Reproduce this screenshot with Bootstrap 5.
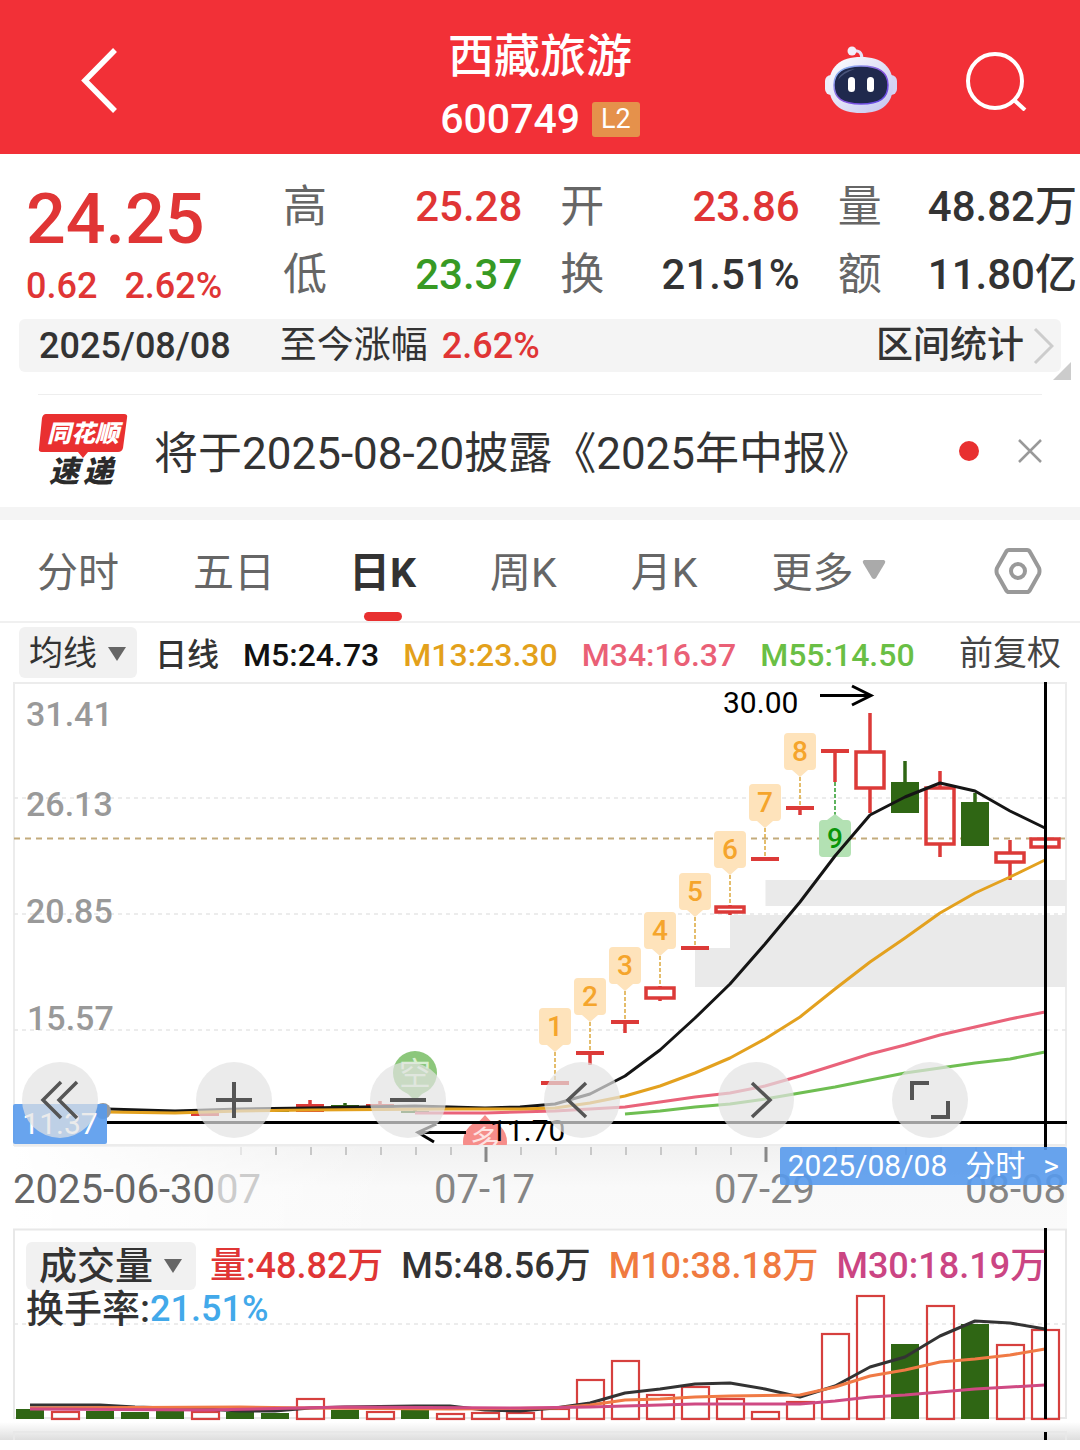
<!DOCTYPE html>
<html lang="zh-CN">
<head>
<meta charset="utf-8">
<meta name="viewport" content="width=device-width, initial-scale=1">
<title>西藏旅游 600749</title>
<link rel="stylesheet" href="https://cdn.jsdelivr.net/npm/bootstrap@5.3.0/dist/css/bootstrap.min.css">
<style>
  body { font-family: Roboto, "Noto Sans CJK SC", sans-serif; color: #333; background: #fff; overflow-x: hidden; }
  button { font: inherit; color: inherit; background: none; border: 0; padding: 0; }
  svg { display: block; }
  .up { color: #e03535; }
  .down { color: #379a24; }
  .fw-mid { font-weight: 500; }

  .topbar { background: #f23037; color: #fff; display: grid; grid-template-columns: 1fr auto 1fr; padding: 28px 53px 15px; }
  .topbar h1 { font-size: 46px; line-height: 56px; font-weight: 500; margin: 0 0 15px; }
  .back { padding-left: 27px; }
  .code-row { font-size: 41px; line-height: 40px; gap: 12px; }
  .level-tag { background: #e5914b; font-size: 27px; line-height: 35px; border-radius: 3px; padding: 0 9px; font-weight: 400; }
  .topbar-tools { gap: 67px; }

  .quote { padding: 19px 3px 10px 26px; }
  .quote-main { width: 257px; flex: none; }
  .price { font-size: 70px; line-height: 70px; padding-top: 11px; }
  .change { font-size: 36px; height: 55px; line-height: 64px; gap: 27px; }
  .stat-grid { display: grid; grid-template-columns: repeat(3, 1fr); column-gap: 38px; flex: 1; }
  .stat { display: flex; justify-content: space-between; align-items: center; height: 68px; font-size: 42px; line-height: 60px; white-space: nowrap; }
  .stat dt { font-weight: 400; font-size: 44px; color: #666; }
  .stat dd { margin: 0; font-weight: 500; }

  .range-bar { position: relative; margin: 0 19px; padding: 0 7px 0 20px; height: 53px; background: #f4f4f4; border-radius: 6px; font-size: 36px; }
  .range-bar .since { margin-left: 49px; margin-right: 14px; font-size: 37px; }
  .range-bar button { font-size: 37px; gap: 9px; }
  .fold { position: absolute; right: -10px; bottom: -8px; }

  .news { margin: 22px 38px 0; border-top: 1px solid #eee; height: 113px; }
  .news-text { font-size: 44px; margin-left: 26px; padding-top: 6px; color: #333; text-decoration: none; white-space: nowrap; }
  .news-dot { width: 20px; height: 20px; border-radius: 50%; background: #e83030; margin-right: 39px; }
  .band { height: 13px; background: #f4f4f4; }

  .period-tabs { height: 103px; border-bottom: 2px solid #f0f0f0; padding: 0 38px 0 37px; gap: 74px; font-size: 41px; color: #666; }
  .period-tabs button { position: relative; height: 100%; white-space: nowrap; padding-top: 6px; }
  .period-tabs .settings { padding-top: 0; }
  .period-tabs .on { color: #333; font-weight: 700; }
  .period-tabs .on::after { content: ""; position: absolute; left: 50%; bottom: 0; width: 38px; height: 9px; margin-left: -19px; border-radius: 5px; background: #e83030; }

  .ma-row { height: 57px; padding: 2px 19px 0; font-size: 32px; white-space: nowrap; }
  .picker { background: #f1f1f1; border-radius: 6px; height: 51px; padding: 2px 10px 0; font-size: 34px; gap: 10px; }
  .ma-row .values { gap: 24px; margin-left: 18px; padding-top: 4px; }
  .ma-row .adjust { font-size: 34px; margin-left: auto; color: #444; padding-top: 2px; }

  .chart { position: relative; }
  .chart svg.plot { width: 100%; height: auto; }
  .plot text { font-family: Roboto, "Noto Sans CJK SC", sans-serif; }
  .chart-tools { position: absolute; left: 22px; top: 382px; gap: 98px; }
  .chart-tools button { width: 76px; height: 76px; border-radius: 50%; background: rgba(227, 227, 227, .7); display: grid; place-items: center; }
  .cursor-price { position: absolute; left: 13px; top: 424px; width: 94px; height: 40px; line-height: 40px; text-align: center; font-size: 30px; color: #fff; background: rgba(88, 154, 236, .9); border-radius: 2px; }
  .cursor-date { position: absolute; right: 13px; top: 467px; height: 38px; line-height: 38px; padding: 0 8px; gap: 18px; font-size: 30px; color: #fff; background: rgba(88, 154, 236, .9); border-radius: 2px; }
  .vol-head { position: absolute; left: 26px; right: 30px; top: 14px; font-size: 36px; white-space: nowrap; }
  .vol-head > div { height: 48px; line-height: 48px; }
  .vol-head .values { gap: 18px; }
  .vol-head .picker { height: 48px; padding: 0 13px; font-size: 38px; margin-right: 14px; }
  .vol-head > .turnover { height: 38px; line-height: 38px; }
  .turnover .name { font-size: 38px; }
</style>
<script src="https://cdn.jsdelivr.net/npm/bootstrap@5.3.0/dist/js/bootstrap.bundle.min.js"></script>
</head>
<body>
<header class="topbar">
  <div class="back d-flex align-items-center pb-2">
    <button aria-label="返回"><svg width="40" height="66" viewBox="0 0 40 66" fill="none" stroke="#fff" stroke-width="5.5"><path d="M35 3 5 33.500 35 64"/></svg></button>
  </div>
  <div class="text-center fw-mid">
    <h1>西藏旅游</h1>
    <div class="code-row d-flex align-items-center justify-content-center"><span>600749</span><span class="level-tag">L2</span></div>
  </div>
  <div class="topbar-tools d-flex align-items-center justify-content-end pb-2">
    <button aria-label="智能助手">
      <svg width="74" height="68" viewBox="0 0 74 68">
        <defs>
          <linearGradient id="shell" x1="0" y1="0" x2="1" y2="1"><stop offset="0" stop-color="#fff"/><stop offset="1" stop-color="#c3c4ee"/></linearGradient>
          <linearGradient id="rim" x1="0" y1="0" x2="1" y2="1"><stop offset="0" stop-color="#8ecbf5"/><stop offset=".5" stop-color="#8a55dd"/><stop offset="1" stop-color="#5a48e6"/></linearGradient>
        </defs>
        <path d="M28 5q10-2 10 8" fill="none" stroke="#e6e2f6" stroke-width="3"/>
        <circle cx="28" cy="5" r="4.500" fill="#f3effb"/>
        <rect x="1" y="29" width="12" height="20" rx="6" fill="#eeeefa"/><rect x="61" y="29" width="12" height="20" rx="6" fill="#d5d4f2"/>
        <path d="M37 11c21 0 32 10 32 28s-10 28-32 28S5 57 5 39s11-28 32-28z" fill="url(#shell)"/>
        <path d="M37 20c18 0 27 6 27 19s-8 19-27 19-27-6-27-19 9-19 27-19z" fill="#1f294d" stroke="url(#rim)" stroke-width="1.500"/>
        <path d="M14 34q3-10 17-11-12 4-17 11z" fill="#4b567c"/>
        <rect x="24" y="31" width="7" height="15" rx="3.500" fill="#fff"/><rect x="43" y="31" width="7" height="15" rx="3.500" fill="#fff"/>
      </svg>
    </button>
    <button aria-label="搜索"><svg width="62" height="62" viewBox="0 0 62 62" fill="none" stroke="#fff" stroke-width="4"><circle cx="30" cy="32" r="27"/><path d="M49 51 60 61"/></svg></button>
  </div>
</header>

<section class="quote d-flex">
  <div class="quote-main up fw-mid">
    <div class="price">24.25</div>
    <div class="change d-flex"><span>0.62</span><span>2.62%</span></div>
  </div>
  <dl class="stat-grid mb-0">
    <div class="stat"><dt>高</dt><dd class="up">25.28</dd></div>
    <div class="stat"><dt>开</dt><dd class="up">23.86</dd></div>
    <div class="stat"><dt>量</dt><dd>48.82万</dd></div>
    <div class="stat"><dt>低</dt><dd class="down">23.37</dd></div>
    <div class="stat"><dt>换</dt><dd>21.51%</dd></div>
    <div class="stat"><dt>额</dt><dd>11.80亿</dd></div>
  </dl>
</section>

<section class="range-bar d-flex align-items-center">
  <span class="fw-mid">2025/08/08</span>
  <span class="since">至今涨幅</span>
  <span class="up fw-mid">2.62%</span>
  <button class="ms-auto d-flex align-items-center fw-mid">区间统计<svg width="21" height="38" viewBox="0 0 21 38" fill="none" stroke="#ccc" stroke-width="3"><path d="M2 2 19 19 2 36"/></svg></button>
  <svg class="fold" width="18" height="18"><path d="M18 0V18H0z" fill="#ccc"/></svg>
</section>

<section class="news d-flex align-items-center">
  <svg width="90" height="76" viewBox="0 0 90 76" font-family="'Noto Sans CJK SC', sans-serif" font-weight="900" font-style="italic" role="img" aria-label="同花顺速递">
    <path d="M8 1H86q4 0 3 4L85 35q-1 4-5 4H50l-5 6-5-6H4q-4 0-3-4L4 5q1-4 4-4z" fill="#e93030"/>
    <text x="9" y="29" font-size="24" fill="#fff">同花顺</text>
    <text x="11" y="69" font-size="30" fill="#2b2b2b">速</text><text x="45" y="69" font-size="30" fill="#2b2b2b">递</text>
  </svg>
  <a class="news-text" href="#">将于2025-08-20披露《2025年中报》</a>
  <span class="news-dot ms-auto"></span>
  <button aria-label="关闭"><svg width="24" height="24" viewBox="0 0 24 24" stroke="#999" stroke-width="2.500"><path d="M1 1 23 23M23 1 1 23"/></svg></button>
</section>
<div class="band"></div>

<nav class="period-tabs d-flex align-items-center">
  <button>分时</button><button>五日</button><button class="on">日K</button><button>周K</button><button>月K</button>
  <button class="d-flex align-items-center">更多<svg class="ms-2 mb-2" width="24" height="20"><path d="M2 0H22q2 1 1 3L14 18q-2 2-4 0L1 3Q0 1 2 0z" fill="#aaa"/></svg></button>
  <button class="settings ms-auto" aria-label="设置"><svg width="48" height="48" viewBox="0 0 48 48" fill="none" stroke="#999" stroke-width="4"><path d="M15 3H33q2 0 3 2L45 21q1 3 0 6L36 43q-1 2-3 2H15q-2 0-3-2L3 27q-1-3 0-6L12 5q1-2 3-2z"/><circle cx="24" cy="24" r="7"/></svg></button>
</nav>

<div class="ma-row d-flex align-items-center">
  <button class="picker d-flex align-items-center">均线<svg width="20" height="14"><path d="M1 0H19L10 14z" fill="#666"/></svg></button>
  <div class="values d-flex align-items-center fw-mid">
    <span>日线</span><span style="color:#111">M5:24.73</span><span style="color:#e3a11b">M13:23.30</span><span style="color:#ea6076">M34:16.37</span><span style="color:#6abf45">M55:14.50</span>
  </div>
  <span class="adjust">前复权</span>
</div>

<section class="chart">
  <svg class="plot" id="kline" viewBox="0 680 1080 548">
    <defs>
      <linearGradient id="axisV" x1="0" y1="0" x2="0" y2="1"><stop offset="0" stop-color="#f1f1f1"/><stop offset=".5" stop-color="#f9f9f9"/><stop offset="1" stop-color="#fafafa"/></linearGradient>
      <linearGradient id="axisH" x1="0" y1="0" x2="1" y2="0"><stop offset="0" stop-color="#fff"/><stop offset="1" stop-color="#fff" stop-opacity="0"/></linearGradient>
      <clipPath id="pane"><path d="M14 680H1067V1145H14z"/></clipPath>
    </defs>
    <path d="M14 1146H1067V1228H14z" fill="url(#axisV)"/>
    <path d="M13 1147H400V1228H13z" fill="url(#axisH)"/>
    <path d="M14 683H1066V1145H14z" fill="none" stroke="#ececec" stroke-width="2"/>
    <g fill="#eaeaea"><path d="M765.500 880H1066V906H765.500z"/><path d="M730 915H1066V987H695V948H730z"/></g>
    <path d="M14 798H1066M14 914H1066M14 1030H1066" stroke="#e6e6e6" stroke-width="1.500" stroke-dasharray="4 4"/>
    <path d="M14 838.500H1066" stroke="#c3ab7c" stroke-width="2" stroke-dasharray="6 5"/>
    <g font-size="34" font-weight="500" fill="#999"><text x="26" y="726">31.41</text><text x="26" y="816">26.13</text><text x="26" y="923">20.85</text><text x="27" y="1030">15.57</text></g>
    <g id="candles"></g>
    <g id="marks"></g>
    <g clip-path="url(#pane)">
      <path d="M415 1101 405 1091H425z" fill="#8cc77b"/><circle cx="415" cy="1073" r="22" fill="#8cc77b"/>
      <text x="415" y="1085" font-size="32" fill="#d9efd2" text-anchor="middle">空</text>
      <path d="M485 1115 476 1125H494z" fill="#f68d8a"/><circle cx="485" cy="1142" r="22" fill="#f68d8a"/>
      <text x="485" y="1152" font-size="30" fill="#fde3e2" text-anchor="middle">多</text>
    </g>
    <g fill="none" stroke-width="3" stroke-linejoin="round">
      <polyline stroke="#6fbe52" points="625,1114 660,1111 695,1107 730,1104 765,1099 800,1093 835,1087 870,1080 905,1073 940,1068 975,1063 1010,1059 1045,1052"/>
      <polyline stroke="#e9637a" points="415,1113 485,1113 555,1111 590,1109 625,1107 660,1102 695,1097 730,1093 765,1086 800,1076 835,1065 870,1054 905,1045 940,1035 975,1027 1010,1019 1045,1012"/>
      <polyline stroke="#151515" points="107,1109 175,1111 240,1109 310,1108 415,1106 485,1108 520,1107 555,1104 590,1094 625,1076 660,1050 695,1018 730,984 765,944 800,902 835,856 870,815 905,797 940,783 975,791 1010,811 1045,828"/>
      <polyline stroke="#e3a11f" points="107,1112 175,1113 240,1111 310,1110 450,1109 520,1109 555,1108 590,1103 625,1096 660,1086 695,1073 730,1058 765,1039 800,1017 835,989 870,962 905,938 940,913 975,893 1010,877 1045,860"/>
    </g>
    <circle cx="103" cy="1111" r="8" fill="#999"/>
    <g fill="none" stroke="#000" stroke-width="3">
      <path d="M107 1122.500H1067M1045.500 682V1150"/>
      <path d="M820 695.500H871M852 686 871 695.500 852 705M466 1132.500H418M436 1124 418 1132.500 434 1142"/>
    </g>
    <g font-size="30" fill="#000"><text x="723" y="713">30.00</text><text x="490" y="1141">11.70</text></g>
    <g id="ticks"></g>
    <g font-size="40" fill="#858585">
      <text x="13" y="1203" fill="#666">2025-06-30</text><text x="216" y="1203" fill="#ccc">07</text>
      <text x="434" y="1203">07-17</text><text x="714" y="1203">07-29</text><text x="965" y="1203">08-08</text>
    </g>
  </svg>
  <span class="cursor-price">11.37</span>
  <button class="cursor-date d-flex align-items-center"><span>2025/08/08</span><span>分时</span><span>&gt;</span></button>
  <div class="chart-tools d-flex">
    <button aria-label="最早"><svg width="40" height="40" viewBox="0 0 40 40" fill="none" stroke="#555" stroke-width="3.500"><path d="M21 2 3 20 21 38M37 2 19 20 37 38"/></svg></button>
    <button aria-label="放大"><svg width="36" height="36" viewBox="0 0 36 36" stroke="#555" stroke-width="4"><path d="M0 18H36M18 0V36"/></svg></button>
    <button aria-label="缩小"><svg width="36" height="36" viewBox="0 0 36 36" stroke="#555" stroke-width="4"><path d="M0 18H36"/></svg></button>
    <button aria-label="左移"><svg width="40" height="40" viewBox="0 0 40 40" fill="none" stroke="#555" stroke-width="3.500"><path d="M24 3 6 20 24 37"/></svg></button>
    <button aria-label="右移"><svg width="40" height="40" viewBox="0 0 40 40" fill="none" stroke="#555" stroke-width="3.500"><path d="M16 3 34 20 16 37"/></svg></button>
    <button aria-label="全屏"><svg width="40" height="40" viewBox="0 0 40 40" fill="none" stroke="#555" stroke-width="4"><path d="M2 20V3H19M38 21V37H21"/></svg></button>
  </div>
</section>

<section class="chart">
  <svg class="plot" viewBox="0 1228 1080 212">
    <defs><linearGradient id="fade" x1="0" y1="0" x2="0" y2="1"><stop offset="0" stop-color="#fff"/><stop offset="1" stop-color="#dedede"/></linearGradient></defs>
    <path d="M0 1422H1080V1440H0z" fill="url(#fade)"/>
    <path d="M14 1229.500H1066V1418H14zM14 1440V1432H1066V1440" fill="none" stroke="#e8e8e8" stroke-width="2"/>
    <path d="M14 1324H1066" stroke="#e6e6e6" stroke-width="1.500" stroke-dasharray="4 4"/>
    <g id="volumes"></g>
    <g fill="none" stroke-width="3" stroke-linejoin="round">
      <polyline stroke="#333" points="30,1405 100,1405 135,1407 205,1409 240,1411 275,1411 310,1408 345,1407 415,1406 450,1406 485,1410 520,1411 555,1408 590,1403 625,1393 660,1389 695,1384 730,1383 765,1389 800,1397 835,1386 870,1367 905,1357 940,1336 975,1321 1010,1323 1045,1329"/>
      <polyline stroke="#f07a45" points="30,1408 240,1407 310,1408 450,1409 555,1408 590,1405 625,1400 660,1399 695,1397 730,1396 800,1395 835,1387 870,1376 905,1370 940,1362 975,1359 1010,1355 1045,1349"/>
      <polyline stroke="#cf4a83" points="30,1409 205,1410 345,1407 520,1408 590,1407 695,1404 800,1404 835,1401 870,1397 905,1395 940,1392 975,1389 1010,1387 1045,1385"/>
    </g>
    <path d="M1045.500 1228V1419M1045.500 1432V1440" stroke="#000" stroke-width="3"/>
  </svg>
  <div class="vol-head fw-mid">
    <div class="d-flex align-items-center">
      <button class="picker d-flex align-items-center">成交量<svg width="20" height="14"><path d="M1 0H19L10 14z" fill="#666"/></svg></button>
      <div class="values d-flex"><span class="up">量:48.82万</span><span>M5:48.56万</span><span style="color:#f07a40">M10:38.18万</span><span style="color:#cb4583">M30:18.19万</span></div>
    </div>
    <div class="turnover d-flex align-items-center"><span class="name">换手率:</span><span style="color:#42a9ea">21.51%</span></div>
  </div>
</section>

<script>
  const RED = '#dc3a38', GREEN = '#2f6614';
  const put = (id, html) => { document.getElementById(id).innerHTML = html; };

  // Candles: [x, high, body top, body bottom, low, kind]; r = hollow, g = green, f = filled red, d = flat line
  const candles = [
    [205,1114,1114,1115,1115,'d'], [275,1111,1111,1112,1112,'g'], [310,1100,1104,1112,1112,'f'], [345,1103,1105,1107,1107,'g'],
    [380,1101,1106,1107,1107,'d'], [415,1110,1111,1113,1113,'g'],
    [555,1083,1083,1083,1083,'d'], [590,1053,1053,1053,1065,'d'], [625,1022,1022,1022,1033,'d'], [660,986,988,998,1001,'r'],
    [695,948,948,948,948,'d'], [730,905,907,912,915,'r'], [765,859,859,859,859,'d'], [800,808,808,808,815,'d'], [835,751,751,751,782,'d'],
    [870,713,752,788,813,'r'], [905,761,782,813,813,'g'], [940,771,788,844,857,'r'], [975,793,802,846,846,'g'],
    [1010,840,853,862,880,'r'], [1045,838,839,847,848,'r']
  ];
  put('candles', candles.map(([x, h, t, b, l, k]) => {
    const c = k === 'g' ? GREEN : RED;
    let s = `<path d="M${x} ${h}V${t}M${x} ${b}V${l}" stroke="${c}" stroke-width="3.5"/>`;
    if (k === 'r') s += `<rect x="${x - 14}" y="${t}" width="28" height="${b - t}" fill="none" stroke="${c}" stroke-width="3.5"/>`;
    else if (k === 'd') s += `<path d="M${x - 14} ${t}H${x + 14}" stroke="${c}" stroke-width="4"/>`;
    else s += `<rect x="${x - 14}" y="${t}" width="28" height="${b - t}" fill="${c}"/>`;
    return s;
  }).join(''));

  // Numbered flags: [x, top, end of leader]
  const flags = [[555,1008,1082],[590,978,1052],[625,947,1021],[660,912,985],[695,873,946],[730,831,904],[765,784,858],[800,733,807]];
  put('marks', flags.map(([x, y, e], i) =>
    `<path d="M${x} ${y + 44}V${e}" stroke="#dba83c" stroke-width="1.5" stroke-dasharray="4 2"/>
     <path d="M${x - 12} ${y}h24q4 0 4 4v29q0 4-4 4h-4l-8 7-8-7h-4q-4 0-4-4v-29q0-4 4-4z" fill="#fee3bb"/>
     <text x="${x}" y="${y + 28}" font-size="28" font-weight="500" fill="#f5a52c" text-anchor="middle">${i + 1}</text>`).join('') +
    `<path d="M835 782V815" stroke="#2a9a2a" stroke-width="1.5" stroke-dasharray="4 2"/>
     <path d="M823 820h4l8-6 8 6h4q4 0 4 4v29q0 4-4 4h-24q-4 0-4-4v-29q0-4 4-4z" fill="#b3e1b3"/>
     <text x="835" y="848" font-size="28" font-weight="500" fill="#0a960a" text-anchor="middle">9</text>`);

  let ticks = '';
  for (let x = 240; x < 1045; x += 35) {
    const major = x === 485 || x === 765;
    ticks += `<path d="M${x + 1} 1147v${major ? 15 : 8}" stroke="${major ? '#888' : x === 240 ? '#e5e5e5' : '#c8c8c8'}" stroke-width="${major ? 3 : 2}"/>`;
  }
  put('ticks', ticks);

  // Volume bars, one every 35 units from x = 30: top edge and colour
  const tops = [1409,1411,1411,1412,1411,1411,1412,1413,1398,1410,1411,1410,1413,1412,1412,1408,1379,1360,1394,1386,1398,1411,1401,1333,1295,1344,1305,1324,1344,1329];
  const kinds = 'grgggrggrgrgrrrrrrrrrrrrrgrgrr';
  put('volumes', tops.map((t, i) => {
    const x = 30 + i * 35;
    return kinds[i] === 'g'
      ? `<rect x="${x - 14}" y="${t}" width="28" height="${1419 - t}" fill="${GREEN}"/>`
      : `<rect x="${x - 13}" y="${t + 1}" width="27" height="${1418 - t}" fill="none" stroke="#d6403e" stroke-width="2.2"/>`;
  }).join(''));
</script>
</body>
</html>
